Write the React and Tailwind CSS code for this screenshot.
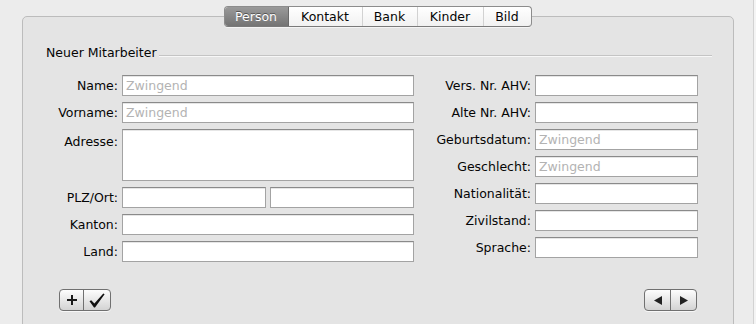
import React from "react";

function Field({ placeholder, w = "w-[292px]", h = "h-[21px]" }) {
  return (
    <div
      className={`${w} ${h} shrink-0 border border-[#a3a3a3] border-t-[#8a8a8a] bg-white shadow-[inset_0_1px_0_#e6e6e6] pl-[3px] text-[#b3b3b3] flex items-start pt-[2px] leading-[15px]`}
    >
      {placeholder}
    </div>
  );
}

function Row({ label, children, labelW, top }) {
  return (
    <div className={`flex ${top ? "items-start" : "items-center"} gap-[4px]`}>
      <div className={`${labelW} shrink-0 text-right leading-[15px] ${top ? "pt-[5px]" : ""}`}>{label}</div>
      {children}
    </div>
  );
}

const tabs = [
  { name: "Person", w: "w-[64px]", sel: true },
  { name: "Kontakt", w: "w-[74px]" },
  { name: "Bank", w: "w-[55px]" },
  { name: "Kinder", w: "w-[66px]" },
  { name: "Bild", w: "w-[47px]", last: true },
];

export default function App() {
  return (
    <div className="w-[756px] h-[324px] overflow-hidden flex bg-[#ececec] font-['DejaVu_Sans',sans-serif] text-[12.5px] text-[#050505]">
      <div className="flex-1">
        <div className="mt-[16px] ml-[22px] w-[712px] h-[330px] border border-[#bcbcbc] rounded-[5px] bg-[#e4e4e4]">
          {/* Tabs */}
          <div className="-mt-[11px] flex justify-center pr-[1px]">
            <div className="flex h-[21px] rounded-[4px] border border-[#8c8c8c] border-b-[#7a7a7a] overflow-hidden bg-linear-to-b from-white to-[#f1f1f1] shadow-[0_1px_0_rgba(255,255,255,0.6)]">
              {tabs.map((t) => (
                <div
                  key={t.name}
                  className={`${t.w} flex items-center justify-center leading-[15px] ${
                    t.sel
                      ? "bg-linear-to-b from-[#9a9a9a] to-[#747474] text-white [text-shadow:0_-1px_0_#555] border-r border-[#6a6a6a]"
                      : t.last
                      ? "text-[#050505]"
                      : "text-[#050505] border-r border-[#d2d2d2]"
                  }`}
                >
                  {t.name}
                </div>
              ))}
            </div>
          </div>

          {/* Section header */}
          <div className="mt-[18px] pl-[23px] pr-[21px] flex items-end">
            <span className="leading-[15px]">Neuer Mitarbeiter</span>
            <div className="flex-1 ml-[2px] mb-[3px] h-[2px] border-t border-[#c4c4c4] border-b border-b-[#f7f7f7]" />
          </div>

          {/* Form */}
          <div className="mt-[15px] flex">
            <div className="flex flex-col gap-[6px]">
              <Row label="Name:" labelW="w-[95px]">
                <Field placeholder="Zwingend" />
              </Row>
              <Row label="Vorname:" labelW="w-[95px]">
                <Field placeholder="Zwingend" />
              </Row>
              <Row label="Adresse:" labelW="w-[95px]" top>
                <Field h="h-[52px]" />
              </Row>
              <Row label="PLZ/Ort:" labelW="w-[95px]">
                <div className="flex gap-[4px]">
                  <Field w="w-[144px]" />
                  <Field w="w-[144px]" />
                </div>
              </Row>
              <Row label="Kanton:" labelW="w-[95px]">
                <Field />
              </Row>
              <Row label="Land:" labelW="w-[95px]">
                <Field />
              </Row>
            </div>
            <div className="ml-[4px] flex flex-col gap-[6px]">
              <Row label="Vers. Nr. AHV:" labelW="w-[113px]">
                <Field w="w-[163px]" />
              </Row>
              <Row label="Alte Nr. AHV:" labelW="w-[113px]">
                <Field w="w-[163px]" />
              </Row>
              <Row label="Geburtsdatum:" labelW="w-[113px]">
                <Field w="w-[163px]" placeholder="Zwingend" />
              </Row>
              <Row label="Geschlecht:" labelW="w-[113px]">
                <Field w="w-[163px]" placeholder="Zwingend" />
              </Row>
              <Row label="Nationalität:" labelW="w-[113px]">
                <Field w="w-[163px]" />
              </Row>
              <Row label="Zivilstand:" labelW="w-[113px]">
                <Field w="w-[163px]" />
              </Row>
              <Row label="Sprache:" labelW="w-[113px]">
                <Field w="w-[163px]" />
              </Row>
            </div>
          </div>

          {/* Bottom buttons */}
          <div className="mt-[27px] pl-[36px] pr-[36px] flex justify-between">
            <div className="flex h-[22px] rounded-[4px] border border-[#707070] bg-linear-to-b from-[#fdfdfd] to-[#d3d3d3] shadow-[0_1px_0_rgba(255,255,255,0.7)]">
              <div className="w-[24px] flex items-center justify-center border-r border-[#707070]">
                <svg width="10" height="10" viewBox="0 0 10 10">
                  <rect x="4" y="0" width="2" height="10" fill="#1a1a1a" />
                  <rect x="0" y="4" width="10" height="2" fill="#1a1a1a" />
                </svg>
              </div>
              <div className="w-[26px] flex items-center justify-center">
                <svg width="16" height="15" viewBox="0 0 16 15">
                  <path d="M0.5 8.3 L2.2 7.2 L5.4 10.6 L14.3 0.4 L15.6 1.3 L6 14.6 L5 14.6 Z" fill="#111" />
                </svg>
              </div>
            </div>
            <div className="flex h-[22px] rounded-[4px] border border-[#707070] bg-linear-to-b from-[#fdfdfd] to-[#d3d3d3] shadow-[0_1px_0_rgba(255,255,255,0.7)]">
              <div className="w-[26px] flex items-center justify-center border-r border-[#707070]">
                <svg width="8" height="9" viewBox="0 0 8 9">
                  <polygon points="0,4.5 8,0 8,9" fill="#222" />
                </svg>
              </div>
              <div className="w-[25px] flex items-center justify-center">
                <svg width="8" height="9" viewBox="0 0 8 9">
                  <polygon points="0,0 8,4.5 0,9" fill="#222" />
                </svg>
              </div>
            </div>
          </div>
        </div>
      </div>
      <div className="w-[3px] border-l border-[#d2d2d2] bg-[#f4f4f4]" />
    </div>
  );
}
